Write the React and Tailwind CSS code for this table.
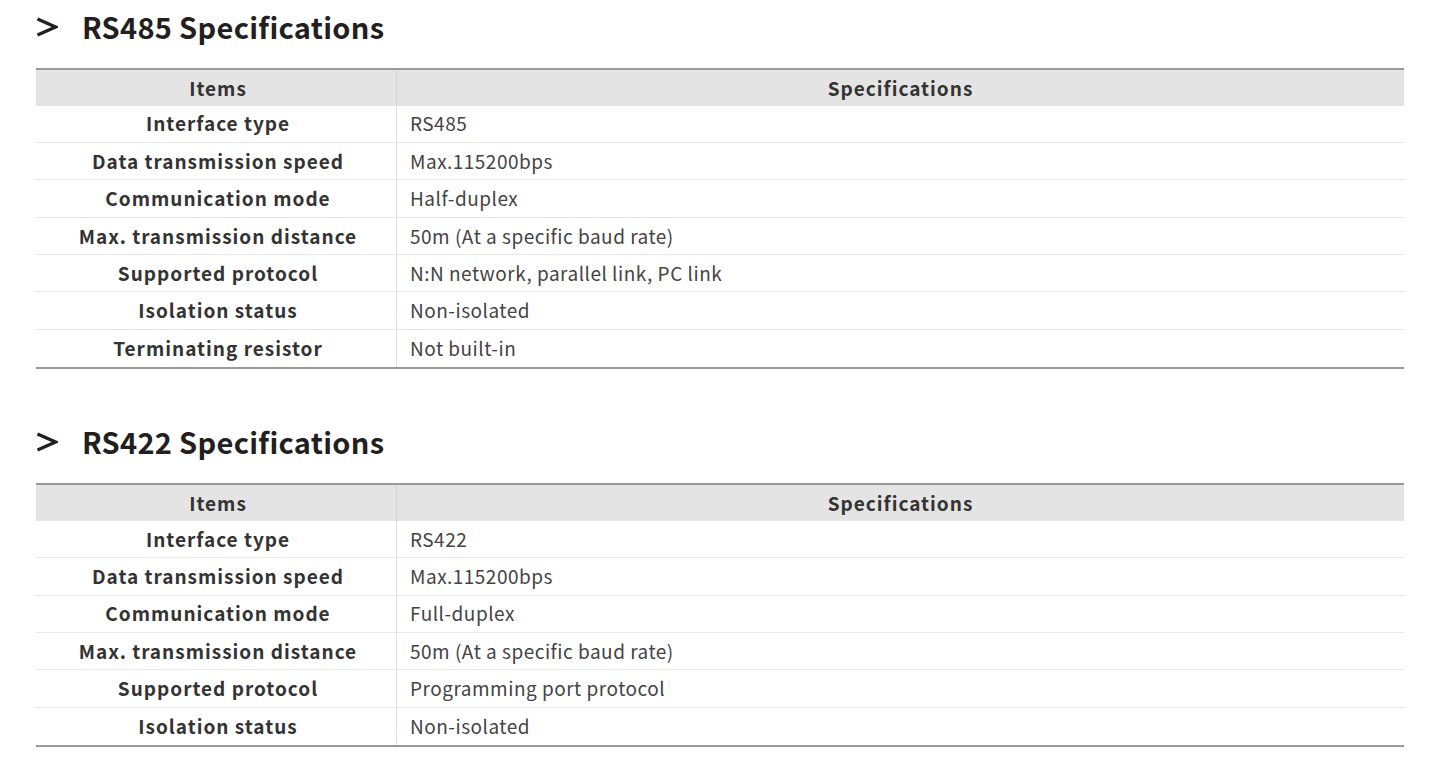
const sections = [
  {
    title: "RS485 Specifications",
    rows: [
      ["Interface type", "RS485"],
      ["Data transmission speed", "Max.115200bps"],
      ["Communication mode", "Half-duplex"],
      ["Max. transmission distance", "50m (At a specific baud rate)"],
      ["Supported protocol", "N:N network, parallel link, PC link"],
      ["Isolation status", "Non-isolated"],
      ["Terminating resistor", "Not built-in"],
    ],
  },
  {
    title: "RS422 Specifications",
    rows: [
      ["Interface type", "RS422"],
      ["Data transmission speed", "Max.115200bps"],
      ["Communication mode", "Full-duplex"],
      ["Max. transmission distance", "50m (At a specific baud rate)"],
      ["Supported protocol", "Programming port protocol"],
      ["Isolation status", "Non-isolated"],
    ],
  },
];

function Chevron() {
  return (
    <svg width="22" height="22" viewBox="0 0 22 22" className="shrink-0 mt-[1px]">
      <polyline points="1.5,3 19.5,11 1.5,19" fill="none" stroke="#231f20" strokeWidth="3.2" strokeLinejoin="miter" />
    </svg>
  );
}

function Section({ title, rows }) {
  return (
    <div>
      <div className="flex items-center h-[40px]">
        <Chevron />
        <h2 className="ml-[24px] text-[29px] font-bold text-[#231f20] leading-none tracking-[0.3px]">{title}</h2>
      </div>
      <div className="mt-[22px] border-t-2 border-b-2 border-[#9a9a9a]">
        <div className="flex h-[35.5px] bg-[#e4e4e4] text-[19px] font-bold text-[#333] tracking-[1px]">
          <div className="w-[361px] pl-[4px] flex items-center justify-center border-r border-[#d6d6d6]">Items</div>
          <div className="flex-1 flex items-center justify-center">Specifications</div>
        </div>
        {rows.map(([k, v], i) => (
          <div
            key={i}
            className={`flex h-[37.4px] text-[19px] ${i < rows.length - 1 ? "border-b border-[#e8e8e8]" : ""}`}
          >
            <div className="w-[361px] pl-[4px] flex items-center justify-center border-r border-[#e2e2e2] font-bold text-[#333] tracking-[1px]">{k}</div>
            <div className="flex-1 flex items-center pl-[13px] text-[#444] tracking-[0.5px]">{v}</div>
          </div>
        ))}
      </div>
    </div>
  );
}

export default function App() {
  return (
    <div
      className="w-[1440px] h-[757px] bg-white overflow-hidden"
      style={{ fontFamily: '"Noto Sans CJK SC", "Noto Sans", sans-serif' }}
    >
      <div className="pl-[36px] pr-[36px] pt-[6px] flex flex-col gap-[52px]">
        {sections.map((s, i) => (
          <Section key={i} {...s} />
        ))}
      </div>
    </div>
  );
}
